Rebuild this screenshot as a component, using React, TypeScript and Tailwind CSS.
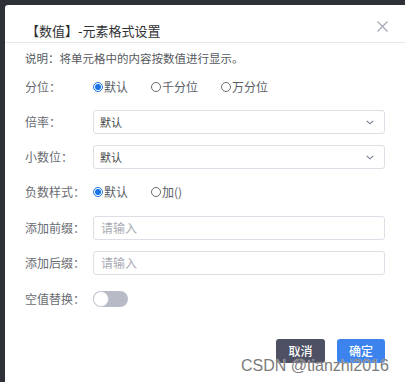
import React from "react";

const font = { fontFamily: '"Noto Sans CJK SC", "Noto Sans", sans-serif' };

function Radio({ checked, label }: { checked?: boolean; label: string }) {
  return (
    <div className="flex items-center">
      {checked ? (
        <span className="w-[10px] h-[10px] rounded-full border border-[#1a73e8] bg-white flex items-center justify-center">
          <span className="w-[6px] h-[6px] rounded-full bg-[#1a73e8]" />
        </span>
      ) : (
        <span className="w-[10px] h-[10px] rounded-full border border-[#6b6b6b] bg-white" />
      )}
      <span className="ml-[1px] text-[12px] leading-[16px] text-[#5a5e68]">{label}</span>
    </div>
  );
}

function Label({ children }: { children: React.ReactNode }) {
  return (
    <div className="w-[68px] shrink-0 text-[12px] leading-[16px] text-[#686b72]">{children}</div>
  );
}

function Select({ value }: { value: string }) {
  return (
    <div className="w-[292px] h-[24px] border border-[#dcdfe6] rounded-[3px] flex items-center justify-between pl-[6px] pr-[10px]">
      <span className="text-[11px] leading-[14px] text-[#444]">{value}</span>
      <svg width="8" height="5" viewBox="0 0 8 5">
        <path d="M0.8 0.8 L4 3.8 L7.2 0.8" fill="none" stroke="#6f7a8e" strokeWidth="1.1" />
      </svg>
    </div>
  );
}

function Input() {
  return (
    <div className="w-[292px] h-[24px] border border-[#dcdfe6] rounded-[3px] flex items-center pl-[7px]">
      <span className="text-[12px] leading-[14px] text-[#a8abb2]">请输入</span>
    </div>
  );
}

export default function App() {
  return (
    <div className="w-[405px] h-[382px] bg-[#2e3138] pl-[5px] pt-[5px] relative overflow-hidden" style={font}>
      <div className="bg-white rounded-tl-[3px] h-full flex flex-col">
        <div className="h-[38px] border-b border-[#e4e7ed] flex items-start justify-between pl-[21px] pr-[17px] pt-[18px]">
          <span className="text-[13px] leading-[16px] font-normal text-[#303133]">【数值】-元素格式设置</span>
          <svg width="11" height="11" viewBox="0 0 11 11" className="mt-[-2px]">
            <path d="M0.5 0.5 L10.5 10.5 M10.5 0.5 L0.5 10.5" stroke="#a3a7b3" strokeWidth="1.2" />
          </svg>
        </div>
        <div className="flex flex-col px-[20px]">
          <div className="mt-[7px] h-[16px] text-[11.5px] leading-[16px] text-[#555960]">说明：将单元格中的内容按数值进行显示。</div>
          <div className="mt-[9px] h-[24px] flex items-center">
            <Label>分位：</Label>
            <div className="flex items-center gap-[23px]">
              <Radio checked label="默认" />
              <Radio label="千分位" />
              <Radio label="万分位" />
            </div>
          </div>
          <div className="mt-[11px] h-[24px] flex items-center">
            <Label>倍率：</Label>
            <Select value="默认" />
          </div>
          <div className="mt-[11px] h-[24px] flex items-center">
            <Label>小数位：</Label>
            <Select value="默认" />
          </div>
          <div className="mt-[11px] h-[24px] flex items-center">
            <Label>负数样式：</Label>
            <div className="flex items-center gap-[23px]">
              <Radio checked label="默认" />
              <Radio label="加()" />
            </div>
          </div>
          <div className="mt-[12px] h-[24px] flex items-center">
            <Label>添加前缀：</Label>
            <Input />
          </div>
          <div className="mt-[11px] h-[24px] flex items-center">
            <Label>添加后缀：</Label>
            <Input />
          </div>
          <div className="mt-[12px] h-[24px] flex items-center">
            <Label>空值替换：</Label>
            <div className="w-[35px] h-[16px] rounded-full bg-[#b8bbc6] relative">
              <span className="absolute left-0 top-0 w-[16px] h-[16px] rounded-full bg-white border border-[#c9ccd4]" />
            </div>
          </div>
          <div className="mt-[28px] flex justify-end gap-[12px]">
            <div className="w-[49px] h-[24px] rounded-[3px] bg-[#4d5163] flex items-center justify-center text-white text-[12px] font-medium">取消</div>
            <div className="w-[48px] h-[24px] rounded-[3px] bg-[#3d83ee] flex items-center justify-center text-white text-[12px] font-medium">确定</div>
          </div>
        </div>
      </div>
      <div
        className="absolute left-[241px] top-[356px] text-[16px] leading-[20px] text-[#7c7c7c] [text-shadow:0_0_1px_#ffffff]"
        style={{ fontFamily: '"Liberation Sans", Arial, sans-serif' }}
      >
        CSDN @tianzhi2016
      </div>
    </div>
  );
}
